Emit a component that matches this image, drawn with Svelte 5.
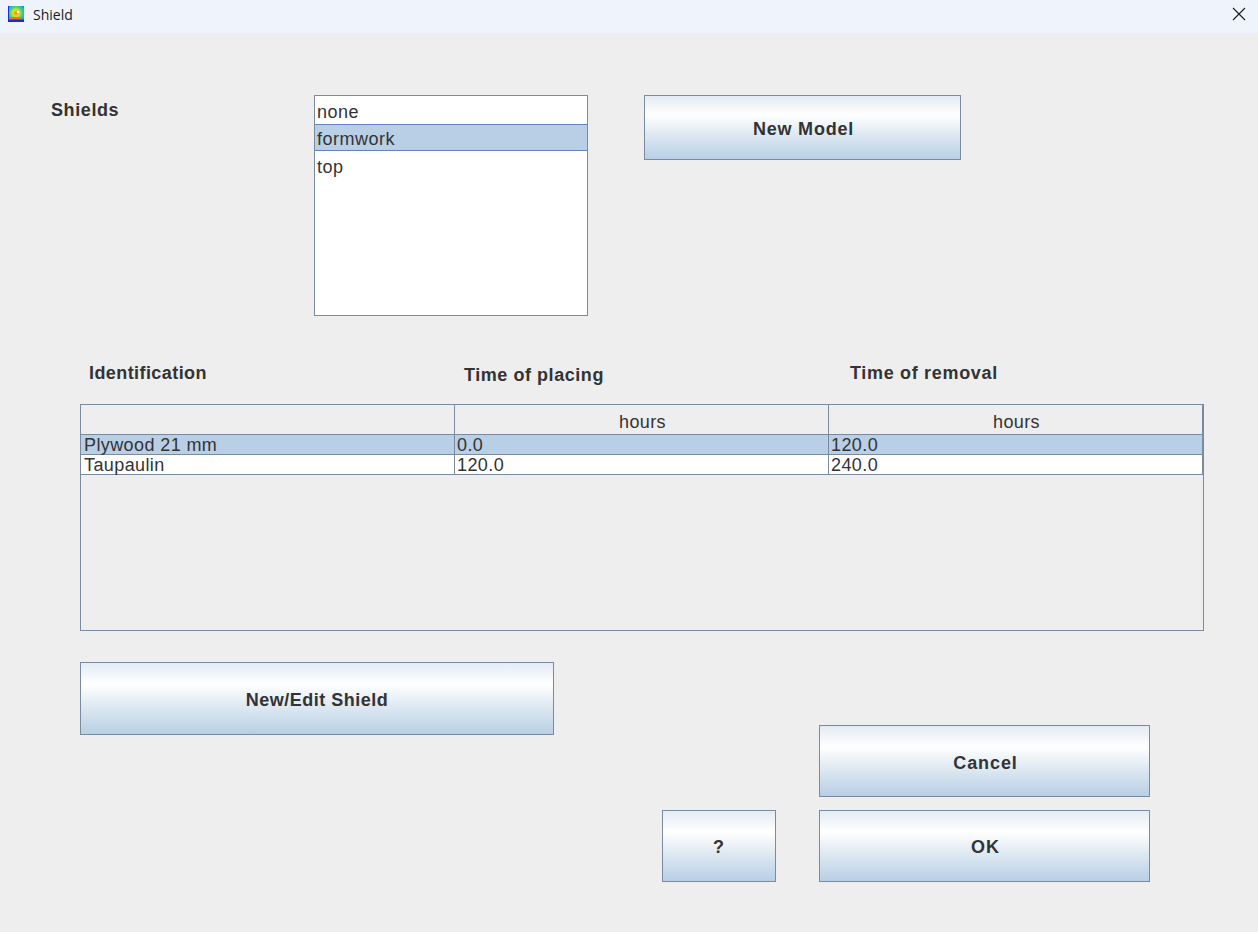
<script lang="ts">
  const shields = ['none', 'formwork', 'top'];
  let selected = 'formwork';

  const layers = [
    { name: 'Plywood 21 mm', placed: '0.0', removed: '120.0', active: true },
    { name: 'Taupaulin', placed: '120.0', removed: '240.0', active: false }
  ];
</script>

<div class="dialog">
  <header class="titlebar">
    <svg class="app-icon" viewBox="0 0 16 16" aria-hidden="true">
      <defs>
        <radialGradient id="heat" gradientUnits="userSpaceOnUse" cx="8" cy="7" r="11">
          <stop offset="0" stop-color="#f08a20" />
          <stop offset="0.3" stop-color="#e8e020" />
          <stop offset="0.55" stop-color="#40d870" />
          <stop offset="0.8" stop-color="#10b0f0" />
          <stop offset="1" stop-color="#1040e0" />
        </radialGradient>
      </defs>
      <rect width="16" height="16" fill="#1030e0" />
      <rect x="1" y="0" width="15" height="13" fill="url(#heat)" />
      <rect x="1" y="11" width="13" height="2" fill="#f07020" />
      <rect x="1" y="13" width="15" height="1" fill="#e02828" />
      <rect x="9" y="5" width="2" height="2" fill="#ffffff" />
    </svg>
    <span class="title">Shield</span>
    <svg class="close" viewBox="0 0 14 14" aria-hidden="true">
      <path d="M1 1 L13 13 M13 1 L1 13" />
    </svg>
  </header>

  <main class="content">
    <section class="top-row">
      <h2 class="shields-label">Shields</h2>
      <ul class="list">
        {#each shields as shield}
          <li class:selected={shield === selected}>{shield}</li>
        {/each}
      </ul>
      <button class="btn new-model">New Model</button>
    </section>

    <section class="columns">
      <h3 class="col-id">Identification</h3>
      <h3 class="col-placing">Time of placing</h3>
      <h3 class="col-removal">Time of removal</h3>
    </section>

    <section class="table">
      <div class="row head">
        <div class="cell"></div>
        <div class="cell">hours</div>
        <div class="cell">hours</div>
      </div>
      {#each layers as layer}
        <div class="row body" class:active={layer.active}>
          <div class="cell name">{layer.name}</div>
          <div class="cell">{layer.placed}</div>
          <div class="cell">{layer.removed}</div>
        </div>
      {/each}
    </section>

    <section class="actions">
      <button class="btn edit">New/Edit Shield</button>
      <div class="confirm">
        <button class="btn cancel">Cancel</button>
        <div class="confirm-row">
          <button class="btn help">?</button>
          <button class="btn ok">OK</button>
        </div>
      </div>
    </section>
  </main>
</div>

<style>
  :global(body) {
    margin: 0;
    background: #eeeeee;
  }

  .dialog {
    width: 1258px;
    height: 932px;
    overflow: hidden;
    background: #eeeeee;
    color: #333333;
    font-family: 'Liberation Sans', Arial, sans-serif;
  }

  .titlebar {
    height: 33px;
    display: flex;
    align-items: center;
    padding: 0 12px 5px 8px;
    box-sizing: border-box;
    background: #eff4fc;
  }

  .app-icon {
    width: 16px;
    height: 16px;
  }

  .title {
    margin-left: 9px;
    font-family: 'Open Sans', sans-serif;
    font-size: 14px;
    color: #1a1a1a;
  }

  .close {
    width: 14px;
    height: 14px;
    margin-left: auto;
  }

  .close path {
    fill: none;
    stroke: #1a1a1a;
    stroke-width: 1.1;
  }

  .content {
    padding-top: 62px;
  }

  .top-row {
    display: flex;
    align-items: flex-start;
    padding-left: 51px;
  }

  .shields-label {
    width: 263px;
    margin: 5px 0 0;
    font-size: 18px;
    line-height: 20px;
    font-weight: 700;
    letter-spacing: 0.6px;
  }

  .list {
    width: 274px;
    height: 221px;
    box-sizing: border-box;
    margin: 0 56px 0 0;
    padding: 1px 0 0;
    list-style: none;
    background: #ffffff;
    border: 1px solid #7a8a9f;
  }

  .list li {
    height: 27px;
    box-sizing: border-box;
    padding: 3px 2px 0;
    font-size: 18px;
    line-height: 22px;
    letter-spacing: 0.5px;
    border-top: 1px solid transparent;
    border-bottom: 1px solid transparent;
  }

  .list li:last-child {
    padding-top: 4px;
  }

  .list li.selected {
    background: #b8cfe5;
    border-color: #6382bf;
  }

  .btn {
    display: block;
    box-sizing: border-box;
    padding: 3px 0 0 2px;
    border: 1px solid #7a8a9f;
    font-family: inherit;
    font-size: 18px;
    font-weight: 700;
    letter-spacing: 0.9px;
    color: #333333;
    background: linear-gradient(#e3ebf4 0%, #ffffff 30%, #dde8f2 62%, #b8cfe5 100%);
  }

  .new-model {
    width: 317px;
    height: 65px;
    letter-spacing: 0.8px;
  }

  .columns {
    display: flex;
    align-items: flex-start;
    padding: 47px 0 0 89px;
  }

  .columns h3 {
    margin: 0;
    font-size: 18px;
    line-height: 20px;
    font-weight: 700;
    letter-spacing: 0.55px;
  }

  .columns .col-id {
    width: 375px;
    letter-spacing: 0.42px;
  }

  .col-placing {
    width: 386px;
    padding-top: 2px;
  }

  .columns .col-removal {
    letter-spacing: 0.68px;
  }

  .table {
    width: 1124px;
    height: 227px;
    box-sizing: border-box;
    margin: 19px 0 0 80px;
    border: 1px solid #7a8a9f;
  }

  .row {
    display: grid;
    grid-template-columns: 374px 374px 374px;
    box-sizing: border-box;
  }

  .head {
    height: 29px;
  }

  .head .cell {
    padding-top: 8px;
    text-align: center;
  }

  .body {
    height: 20px;
    background: #ffffff;
    border-top: 1px solid #7a8a9f;
  }

  .body:last-child {
    height: 21px;
    border-bottom: 1px solid #7a8a9f;
  }

  .body.active {
    background: #b8cfe5;
  }

  .cell {
    box-sizing: border-box;
    padding: 1px 0 0 2px;
    font-size: 18px;
    line-height: 18px;
    letter-spacing: 0.4px;
    border-right: 1px solid #7a8a9f;
  }

  .cell.name {
    padding-left: 3px;
  }

  .actions {
    display: flex;
    align-items: flex-start;
    margin: 31px 0 0 80px;
  }

  .btn.edit {
    width: 474px;
    height: 73px;
    padding-left: 0;
    letter-spacing: 0.5px;
  }

  .confirm {
    margin: 63px 0 0 108px;
    display: flex;
    flex-direction: column;
    align-items: flex-end;
    gap: 13px;
  }

  .cancel,
  .ok {
    width: 331px;
    height: 72px;
  }

  .btn.cancel {
    padding-top: 5px;
  }

  .confirm-row {
    display: flex;
    gap: 43px;
  }

  .btn.help {
    width: 114px;
    height: 72px;
    padding-left: 0;
  }
</style>
